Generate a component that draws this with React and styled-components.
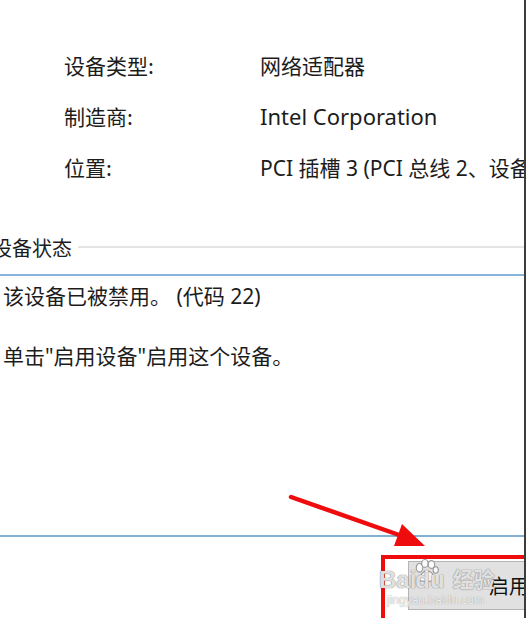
import React from "react"
import styled, { createGlobalStyle } from "styled-components"

const GlobalStyle = createGlobalStyle`
    html, body {
        margin: 0;
        padding: 0;
        background: #ffffff;
    }
`;

const Page = styled.div`
    position: relative;
    width: 526px;
    height: 618px;
    box-sizing: border-box;
    border-right: 2px solid #3d3d3d;
    overflow: hidden;
    background: #ffffff;
    font-family: "Noto Sans", "Noto Sans CJK SC", sans-serif;
    color: #1c1c1c;
    display: flex;
    flex-direction: column;
`;

const InfoGrid = styled.div`
    display: grid;
    grid-template-columns: 196px 1fr;
    grid-auto-rows: 51px;
    align-items: center;
    padding: 39px 0 0 64px;
    font-size: 21px;
    white-space: nowrap;
`;

const Label = styled.div`
    font-family: "Noto Sans CJK SC", sans-serif;
`;

const Value = styled.div`
    font-family: "Noto Sans", "Noto Sans CJK SC", sans-serif;
    font-size: ${p => (p.$latin ? "22px" : "21px")};
`;

const Legend = styled.div`
    display: flex;
    align-items: center;
    gap: 6px;
    margin-top: 40px;
    height: 30px;
    font-family: "Noto Sans CJK SC", sans-serif;
    font-size: 20px;
    white-space: nowrap;
`;

const LegendText = styled.span`
    margin-left: -8px;
`;

const LegendLine = styled.div`
    flex: 1;
    height: 2px;
    background: #e4e4e4;
`;

const StatusBox = styled.div`
    margin-top: 12px;
    height: 263px;
    flex-shrink: 0;
    box-sizing: border-box;
    border-top: 2px solid #86b4da;
    border-bottom: 2px solid #82b0d2;
    padding: 8px 0 0 3px;
    display: flex;
    flex-direction: column;
    gap: 36px;
    font-family: "Noto Sans", "Noto Sans CJK SC", sans-serif;
    font-size: 21px;
    white-space: nowrap;
`;

const StatusLine = styled.div`
    line-height: 24px;
`;

const Footer = styled.div`
    flex: 1;
    display: flex;
    padding: 18px 0 0 381px;
`;

const Highlight = styled.div`
    position: relative;
    flex: 1;
    border: 4px solid #ee0c0c;
    border-right: none;
    border-bottom: none;
    padding: 2px 0 0 23px;
    display: flex;
`;

const Button = styled.div`
    flex: 1;
    height: 49px;
    box-sizing: border-box;
    background: #e1e1e1;
    border: 1px solid #b4b4b4;
    border-right: none;
    padding-left: 80px;
    display: flex;
    align-items: center;
    font-family: "Noto Sans CJK SC", sans-serif;
    font-size: 20px;
    color: #111;
    white-space: nowrap;
`;

const Watermark = styled.div`
    position: absolute;
    left: -6px;
    top: 0px;
    display: flex;
    flex-direction: column;
    align-items: flex-start;
    pointer-events: none;
`;

const MarkRow = styled.div`
    display: flex;
    align-items: flex-end;
    font-family: "Liberation Sans", "Noto Sans CJK SC", sans-serif;
    font-size: 24px;
    font-weight: bold;
    line-height: 26px;
    height: 34px;
    color: rgba(255, 255, 255, 0.8);
    text-shadow: 0 0 1px rgba(110, 110, 110, 0.8), 0 0 1px rgba(110, 110, 110, 0.8);
`;

const MarkUrl = styled.div`
    font-family: "Liberation Sans", sans-serif;
    font-size: 12px;
    margin-left: 8px;
    color: rgba(255, 255, 255, 0.85);
    text-shadow: 0 0 1px rgba(110, 110, 110, 0.8);
`;

const ArrowLayer = styled.svg`
    position: absolute;
    left: 0;
    top: 0;
    pointer-events: none;
`;

const Paw = () => (
    <svg width="26" height="24" viewBox="0 0 24 22" style={{ margin: "0 0 10px -3px" }}>
        <g fill="rgba(255,255,255,0.85)" stroke="rgba(120,120,120,0.75)" strokeWidth="1">
            <ellipse cx="6" cy="8" rx="3" ry="4" />
            <ellipse cx="11" cy="4" rx="3" ry="3.6" />
            <ellipse cx="17" cy="5" rx="3" ry="3.6" />
            <ellipse cx="21" cy="10" rx="2.4" ry="3" />
            <path d="M6 19 C6 14 10 11 13 11 C16 11 20 14 20 19 C20 21 6 21 6 19 Z" />
        </g>
    </svg>
)

export default function App() {
    return (
        <Page>
            <GlobalStyle />
            <InfoGrid>
                <Label>设备类型:</Label>
                <Value>网络适配器</Value>
                <Label>制造商:</Label>
                <Value $latin>Intel Corporation</Value>
                <Label>位置:</Label>
                <Value>PCI 插槽 3 (PCI 总线 2、设备 0、功能 0)</Value>
            </InfoGrid>
            <Legend>
                <LegendText>设备状态</LegendText>
                <LegendLine />
            </Legend>
            <StatusBox>
                <StatusLine>该设备已被禁用。 (代码 22)</StatusLine>
                <StatusLine>单击"启用设备"启用这个设备。</StatusLine>
            </StatusBox>
            <Footer>
                <Highlight>
                    <Button>启用设备(E)</Button>
                    <Watermark>
                        <MarkRow>
                            <span>Bai</span>
                            <Paw />
                            <span style={{ marginLeft: -24 }}>du</span>
                            <span style={{ marginLeft: 8, fontSize: 21 }}>经验</span>
                        </MarkRow>
                        <MarkUrl>jingyan.baidu.com</MarkUrl>
                    </Watermark>
                </Highlight>
            </Footer>
            <ArrowLayer width="526" height="618">
                <line x1="291" y1="497" x2="402" y2="536" stroke="#ee0c0c" strokeWidth="4.5" strokeLinecap="round" />
                <polygon points="394,546 402,524 425,546" fill="#ee0c0c" />
            </ArrowLayer>
        </Page>
    )
}
